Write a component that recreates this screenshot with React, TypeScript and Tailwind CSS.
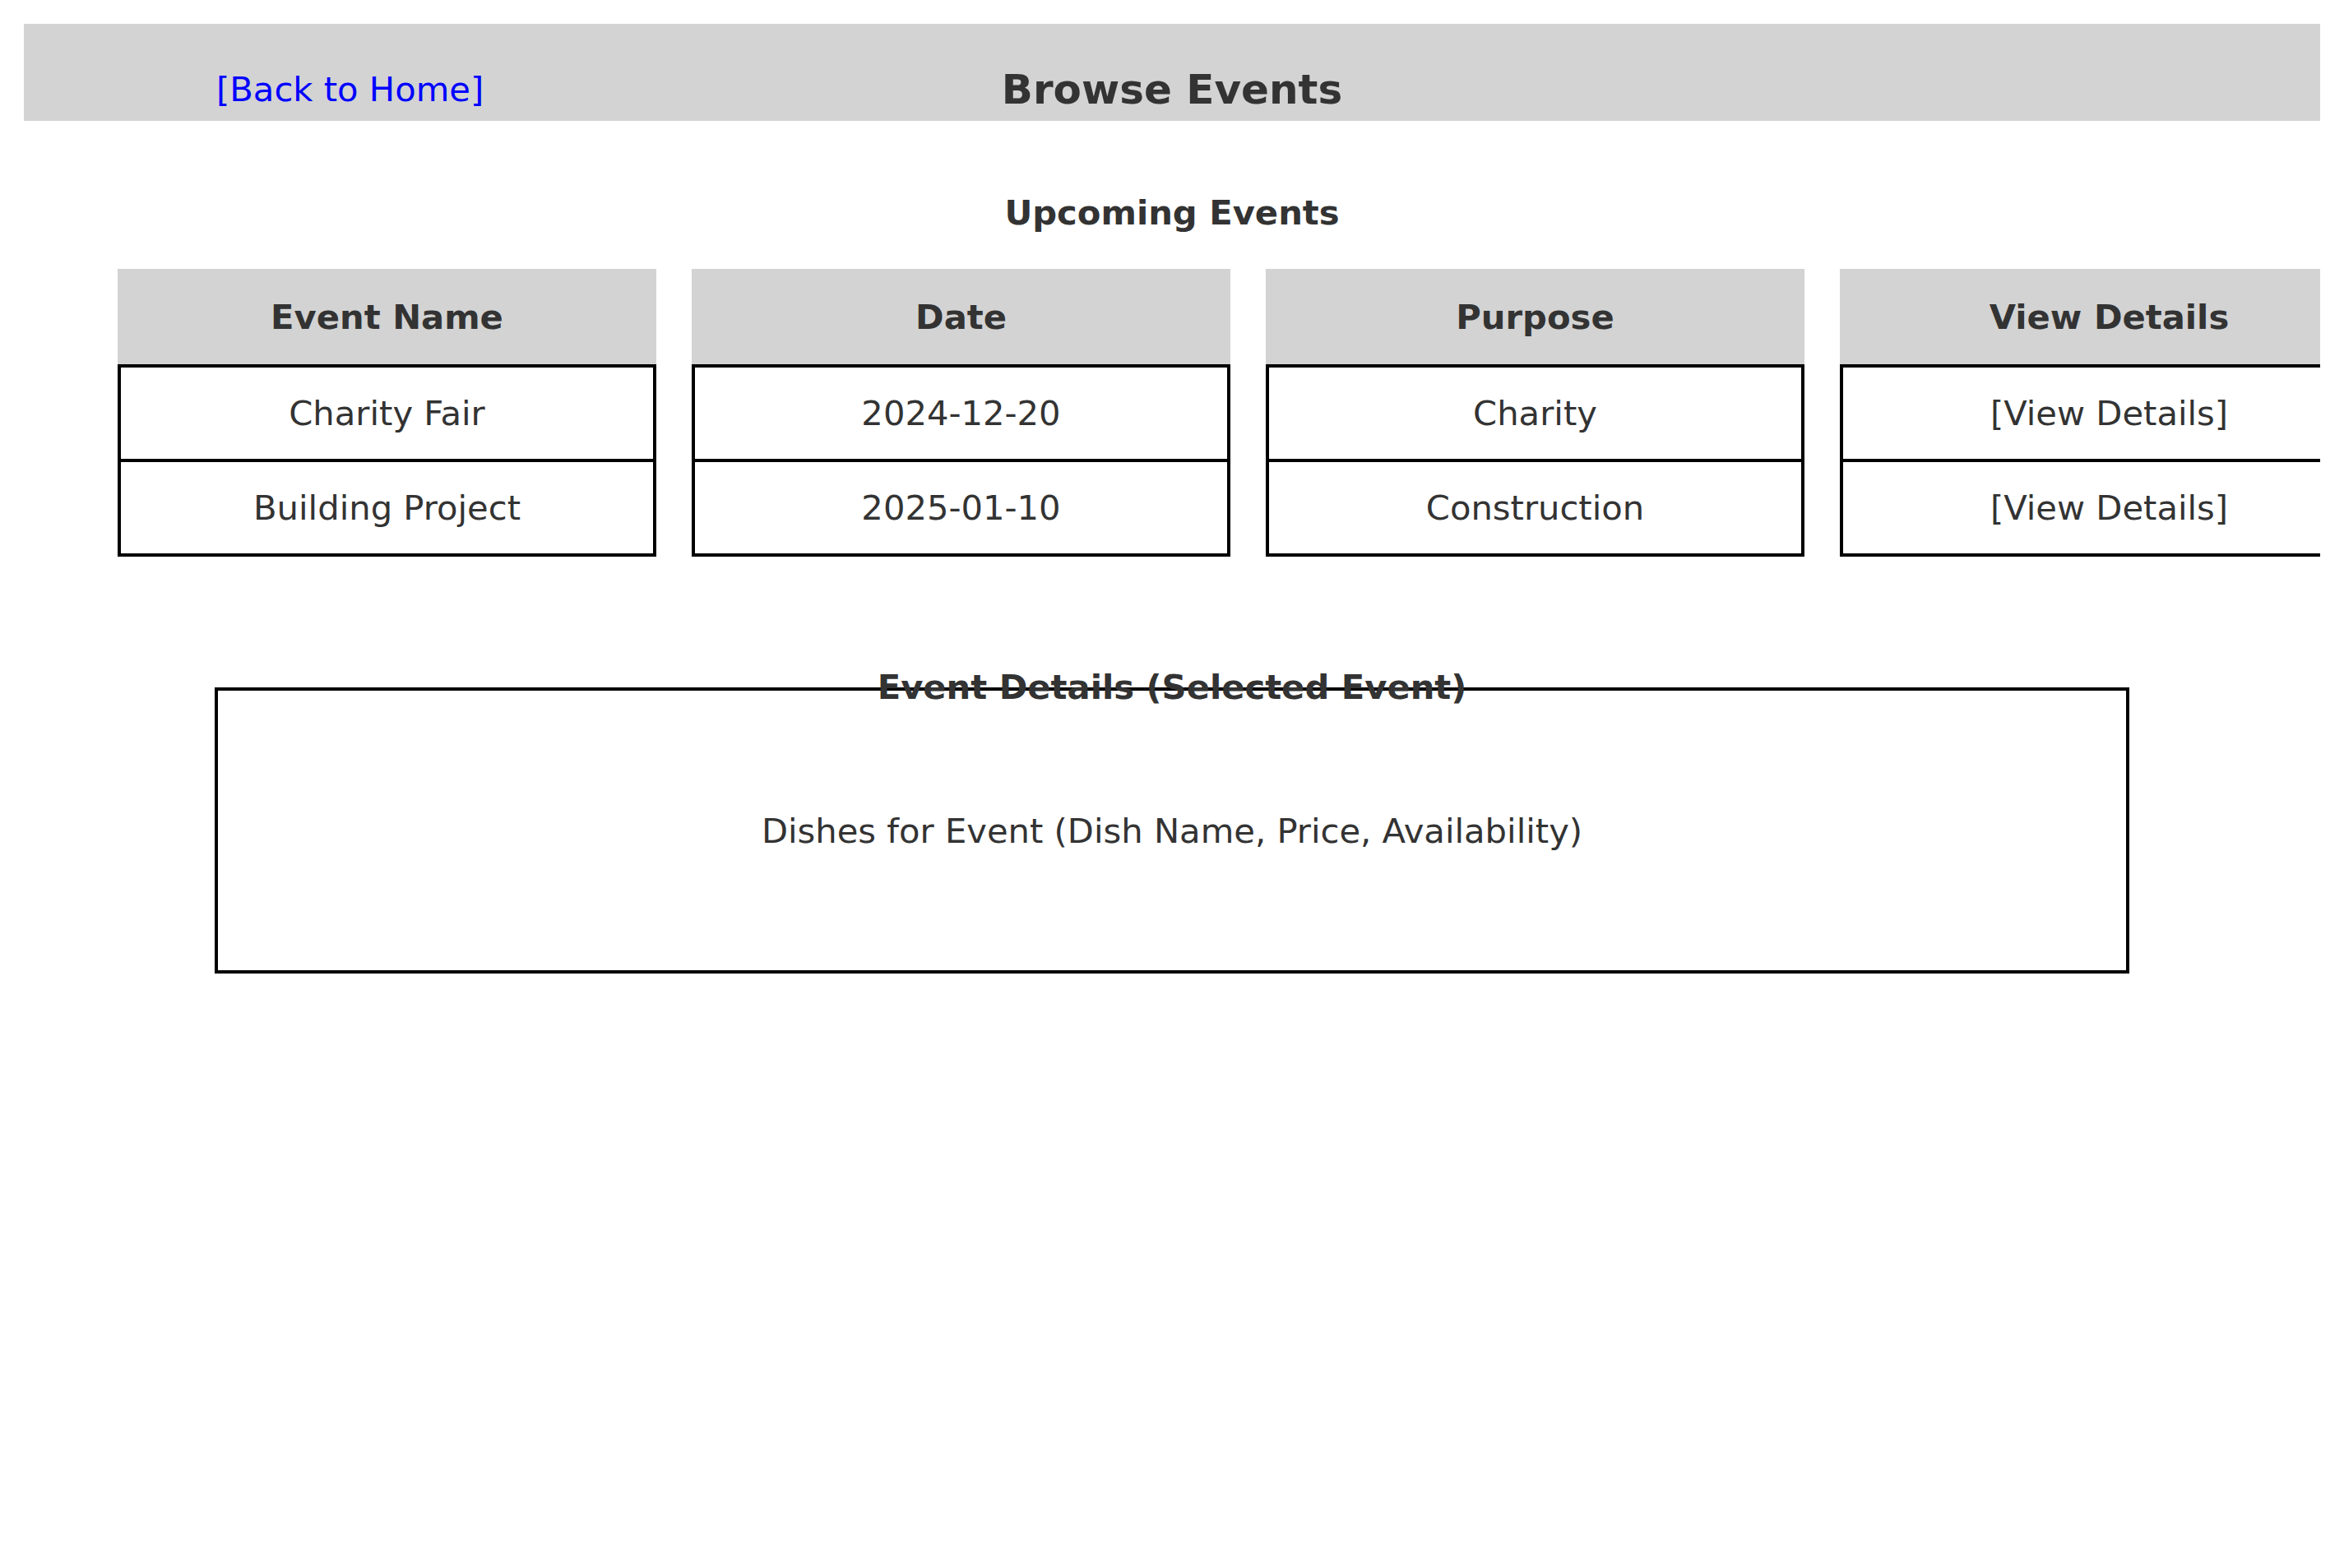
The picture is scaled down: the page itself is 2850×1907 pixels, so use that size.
import React from 'react';

type EventRow = {
  name: string;
  date: string;
  purpose: string;
};

const events: EventRow[] = [
  { name: 'Charity Fair', date: '2024-12-20', purpose: 'Charity' },
  { name: 'Building Project', date: '2025-01-10', purpose: 'Construction' },
];

const columns: { title: string; cell: (e: EventRow) => string }[] = [
  { title: 'Event Name', cell: (e) => e.name },
  { title: 'Date', cell: (e) => e.date },
  { title: 'Purpose', cell: (e) => e.purpose },
  { title: 'View Details', cell: () => '[View Details]' },
];

const EventColumn = ({ title, cell }: { title: string; cell: (e: EventRow) => string }) => (
  <div className="flex flex-col w-[655px] shrink-0">
    <div className="h-[116px] bg-[#d3d3d3] flex items-center justify-center font-bold">
      {title}
    </div>
    <div className="border-4 border-black">
      {events.map((item, index) => (
        <div
          key={item.name}
          className={`h-[111px] flex items-center justify-center ${
            index > 0 ? 'border-t-4 border-black h-[115px]' : ''
          }`}
        >
          {cell(item)}
        </div>
      ))}
    </div>
  </div>
);

export default function App() {
  return (
    <div
      className="min-h-screen bg-white text-[#333333] text-[41.7px] leading-[49px] px-[29px] pt-[29px]"
      style={{ fontFamily: '"DejaVu Sans", Verdana, sans-serif' }}
    >
      <div className="h-[118px] bg-[#d3d3d3] grid grid-cols-[1fr_auto_1fr] items-start">
        <div className="pl-[234px] pt-[55px]">
          <a href="#" className="text-[#0000ff]">
            [Back to Home]
          </a>
        </div>
        <h1 className="pt-[51px] text-[50px] leading-[58px] font-bold">Browse Events</h1>
        <div />
      </div>

      <h2 className="mt-[87px] text-center font-bold">Upcoming Events</h2>

      <div className="mt-[44px] overflow-hidden">
        <div className="flex gap-[43px] pl-[114px]">
          {columns.map((col) => (
            <EventColumn key={col.title} title={col.title} cell={col.cell} />
          ))}
        </div>
      </div>

      <h2 className="relative mt-[134px] text-center font-bold">Event Details (Selected Event)</h2>
      <div className="-mt-[24px] mx-[232px] h-[348px] border-4 border-black flex items-center justify-center">
        Dishes for Event (Dish Name, Price, Availability)
      </div>
    </div>
  );
}
